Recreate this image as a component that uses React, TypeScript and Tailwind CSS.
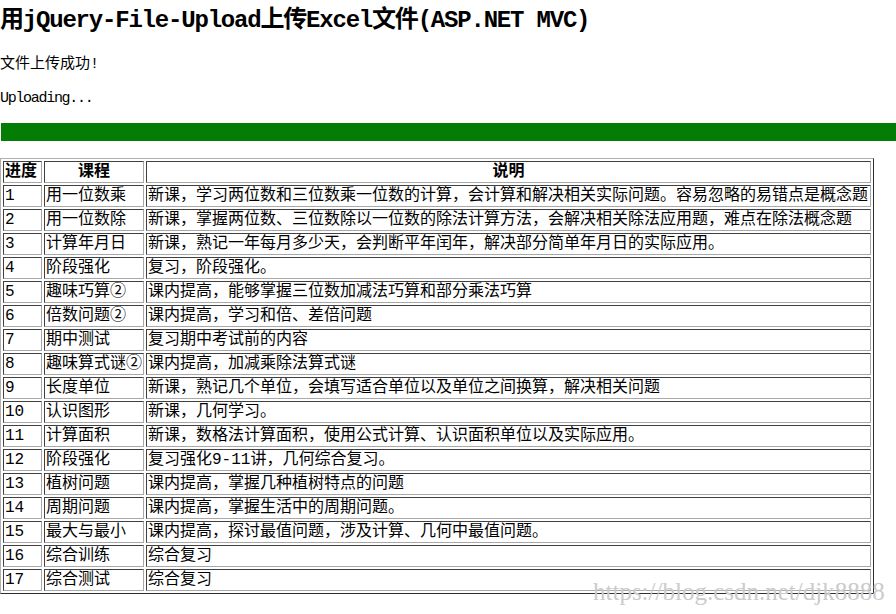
const rows: [string, string, string][] = [
  ['1', '用一位数乘', '新课，学习两位数和三位数乘一位数的计算，会计算和解决相关实际问题。容易忽略的易错点是概念题'],
  ['2', '用一位数除', '新课，掌握两位数、三位数除以一位数的除法计算方法，会解决相关除法应用题，难点在除法概念题'],
  ['3', '计算年月日', '新课，熟记一年每月多少天，会判断平年闰年，解决部分简单年月日的实际应用。'],
  ['4', '阶段强化', '复习，阶段强化。'],
  ['5', '趣味巧算②', '课内提高，能够掌握三位数加减法巧算和部分乘法巧算'],
  ['6', '倍数问题②', '课内提高，学习和倍、差倍问题'],
  ['7', '期中测试', '复习期中考试前的内容'],
  ['8', '趣味算式谜②', '课内提高，加减乘除法算式谜'],
  ['9', '长度单位', '新课，熟记几个单位，会填写适合单位以及单位之间换算，解决相关问题'],
  ['10', '认识图形', '新课，几何学习。'],
  ['11', '计算面积', '新课，数格法计算面积，使用公式计算、认识面积单位以及实际应用。'],
  ['12', '阶段强化', '复习强化9-11讲，几何综合复习。'],
  ['13', '植树问题', '课内提高，掌握几种植树特点的问题'],
  ['14', '周期问题', '课内提高，掌握生活中的周期问题。'],
  ['15', '最大与最小', '课内提高，探讨最值问题，涉及计算、几何中最值问题。'],
  ['16', '综合训练', '综合复习'],
  ['17', '综合测试', '综合复习'],
];

const cell =
  'border border-t-[#404040] border-l-[#404040] border-b-[#a8a8a8] border-r-[#a8a8a8] px-px py-0 leading-[20px] whitespace-nowrap overflow-hidden text-left';

export default function App() {
  return (
    <div className="relative w-[896px] h-[614px] overflow-hidden bg-white text-black font-['Liberation_Mono','Noto_Sans_CJK_SC',monospace]">
      <h1 className="h-[42px] leading-[42px] text-[24px] font-bold tracking-[-1.2px] whitespace-nowrap">
        用jQuery-File-Upload上传Excel文件(ASP.NET MVC)
      </h1>
      <p className="mt-[12px] leading-[22px] text-[15px]">文件上传成功!</p>
      <p className="mt-[12px] leading-[22px] text-[15px] tracking-[-1.3px]">Uploading...</p>
      <div className="mt-[13px] ml-px h-[18px] bg-[#037d03]" />
      <table className="mt-[17px] w-[874px] table-fixed border-separate border-spacing-[2px] border border-t-[#b0b0b0] border-l-[#b0b0b0] border-b-[#303030] border-r-[#303030] text-[16px]">
        <thead>
          <tr>
            <th className={cell + ' w-[39px] font-bold'}>进度</th>
            <th className={cell + ' w-[100px] font-bold !text-center'}>课程</th>
            <th className={cell + ' w-[725px] font-bold !text-center'}>说明</th>
          </tr>
        </thead>
        <tbody>
          {rows.map(([n, course, desc]) => (
            <tr key={n}>
              <td className={cell}>{n}</td>
              <td className={cell}>{course}</td>
              <td className={cell}>{desc}</td>
            </tr>
          ))}
        </tbody>
      </table>
      <div className="absolute left-[593px] top-[578px] text-[25px] leading-[28px] text-[#cbcbcb] font-['Liberation_Serif',serif] whitespace-nowrap">
        https://blog.csdn.net/djk8888
      </div>
    </div>
  );
}
